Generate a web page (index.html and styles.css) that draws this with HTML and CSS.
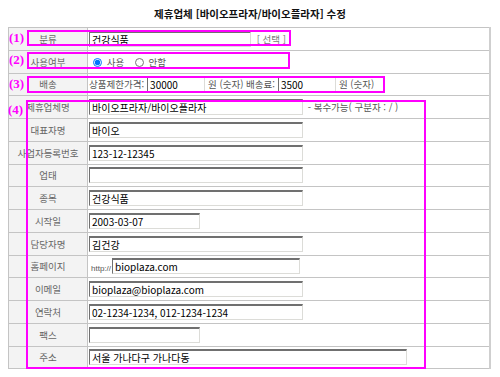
FILE: index.html
```html
<!DOCTYPE html>
<html lang="ko">
<head>
    <meta charset="UTF-8">
    <title>제휴업체 수정</title>
    <link rel="stylesheet" href="styles.css">
</head>
<body>

<div class="page">
    <h1 class="title">제휴업체 [바이오프라자/바이오플라자] 수정</h1>

    <div class="sheet">
        <table class="form">
            <tr>
                <th>분류</th>
                <td><input class="field w-cat" value="건강식품"> <span class="link">[ 선택 ]</span></td>
            </tr>
            <tr>
                <th>사용여부</th>
                <td class="radios">
                    <label><input type="radio" name="use" checked> 사용</label>
                    <label><input type="radio" name="use"> 안함</label>
                </td>
            </tr>
            <tr>
                <th>배송</th>
                <td><span class="txt">상품제한가격:</span><input class="field w-num" value="30000"><span class="txt">원 (숫자) 배송료:</span><input class="field w-num" value="3500"><span class="txt">원 (숫자)</span></td>
            </tr>
            <tr>
                <th>제휴업체명</th>
                <td><input class="field w-long" value="바이오프라자/바이오플라자"> <span class="note">- 복수가능( 구분자 : / )</span></td>
            </tr>
            <tr>
                <th>대표자명</th>
                <td><input class="field w-long" value="바이오"></td>
            </tr>
            <tr>
                <th>사업자등록번호</th>
                <td><input class="field w-long" value="123-12-12345"></td>
            </tr>
            <tr>
                <th>업태</th>
                <td><input class="field w-long" value=""></td>
            </tr>
            <tr>
                <th>종목</th>
                <td><input class="field w-long" value="건강식품"></td>
            </tr>
            <tr>
                <th>시작일</th>
                <td><input class="field w-short" value="2003-03-07"></td>
            </tr>
            <tr>
                <th>담당자명</th>
                <td><input class="field w-long" value="김건강"></td>
            </tr>
            <tr>
                <th>홈페이지</th>
                <td><span class="prefix">http://</span><input class="field w-url" value="bioplaza.com"></td>
            </tr>
            <tr>
                <th>이메일</th>
                <td><input class="field w-long" value="bioplaza@bioplaza.com"></td>
            </tr>
            <tr>
                <th>연락처</th>
                <td><input class="field w-long" value="02-1234-1234, 012-1234-1234"></td>
            </tr>
            <tr>
                <th>팩스</th>
                <td><input class="field w-short" value=""></td>
            </tr>
            <tr>
                <th>주소</th>
                <td><input class="field w-addr" value="서울 가나다구 가나다동"></td>
            </tr>
        </table>

        <!-- 표시 박스 -->
        <div class="mark mark-1"><span class="num">(1)</span></div>
        <div class="mark mark-2"><span class="num">(2)</span></div>
        <div class="mark mark-3"><span class="num">(3)</span></div>
        <div class="mark mark-4"><span class="num num-top">(4)</span></div>
    </div>
</div>

</body>
</html>
```

FILE: styles.css
```css
/* 전체 */
body {
    margin: 0;
    background: #fff;
    font-family: "Noto Sans CJK KR", "Noto Sans", sans-serif;
    color: #000;
}

.page {
    padding: 5px 8px 0 8px;
    width: 484px;
}

.title {
    margin: 0;
    height: 22px;
    line-height: 18px;
    font-size: 10.5px;
    font-weight: bold;
    text-align: center;
    color: #111;
}

/* 표 */
.sheet {
    position: relative;
}

.form {
    width: 483px;
    border-collapse: collapse;
    border-top: 1px solid #c4c4c4;
    border-right: 2px solid #cfcfcf;
}

.form tr {
    height: 22.75px;
}

.form th,
.form td {
    border-bottom: 1px solid #c4c4c4;
    padding: 0;
    font-size: 9.5px;
    line-height: 12px;
    white-space: nowrap;
}

.form th {
    width: 78px;
    background: #f3f3f3;
    border-left: 1px solid #c4c4c4;
    border-right: 1px solid #c4c4c4;
    font-weight: normal;
    color: #666;
    text-align: center;
}

.form td {
    padding-left: 1px;
    color: #555;
    background: #fff;
}

.form td span {
    vertical-align: middle;
}

/* 입력칸 */
.field {
    box-sizing: border-box;
    height: 16px;
    padding: 0 2px;
    margin: 0;
    vertical-align: middle;
    border: 1px solid #dcdcd8;
    border-top: 2px solid #707070;
    border-left: 1px solid #707070;
    font-family: "Noto Sans CJK KR", "Noto Sans", sans-serif;
    font-size: 10px;
    color: #000;
    background: #fff;
}

.w-cat { width: 162px; }
.w-num { width: 58px; margin: 0 3px 0 3px; }
.w-long { width: 214px; }
.w-short { width: 111px; }
.w-url { width: 188px; }
.w-addr { width: 318px; }

.link {
    margin-left: 3px;
    color: #777;
}

.note {
    margin-left: 2px;
    color: #555;
}

.form td .prefix {
    display: inline-block;
    vertical-align: -3px;
    font-family: "Liberation Sans", sans-serif;
    font-size: 8px;
    color: #555;
    margin: 0 1px 0 2px;
}

.radios label {
    margin-left: 4px;
    margin-right: 4px;
}

.radios input {
    width: 9px;
    height: 9px;
    margin: 0 2px 0 0;
    vertical-align: -1px;
}

/* 표시 박스 */
.mark {
    position: absolute;
    box-sizing: border-box;
    border: 2px solid #ff00ff;
}

.mark-1 { left: 19px; top: 3px; width: 264px; height: 16px; }
.mark-2 { left: 19px; top: 25px; width: 263px; height: 17px; }
.mark-3 { left: 19px; top: 49px; width: 358px; height: 17px; }
.mark-4 { left: 18px; top: 73px; width: 400px; height: 269px; }

.num {
    position: absolute;
    left: -20px;
    top: -2px;
    font-family: "Liberation Serif", serif;
    font-weight: bold;
    font-size: 13px;
    line-height: 16px;
    color: #ff00ff;
}

.num-top {
    top: 0;
}
```
